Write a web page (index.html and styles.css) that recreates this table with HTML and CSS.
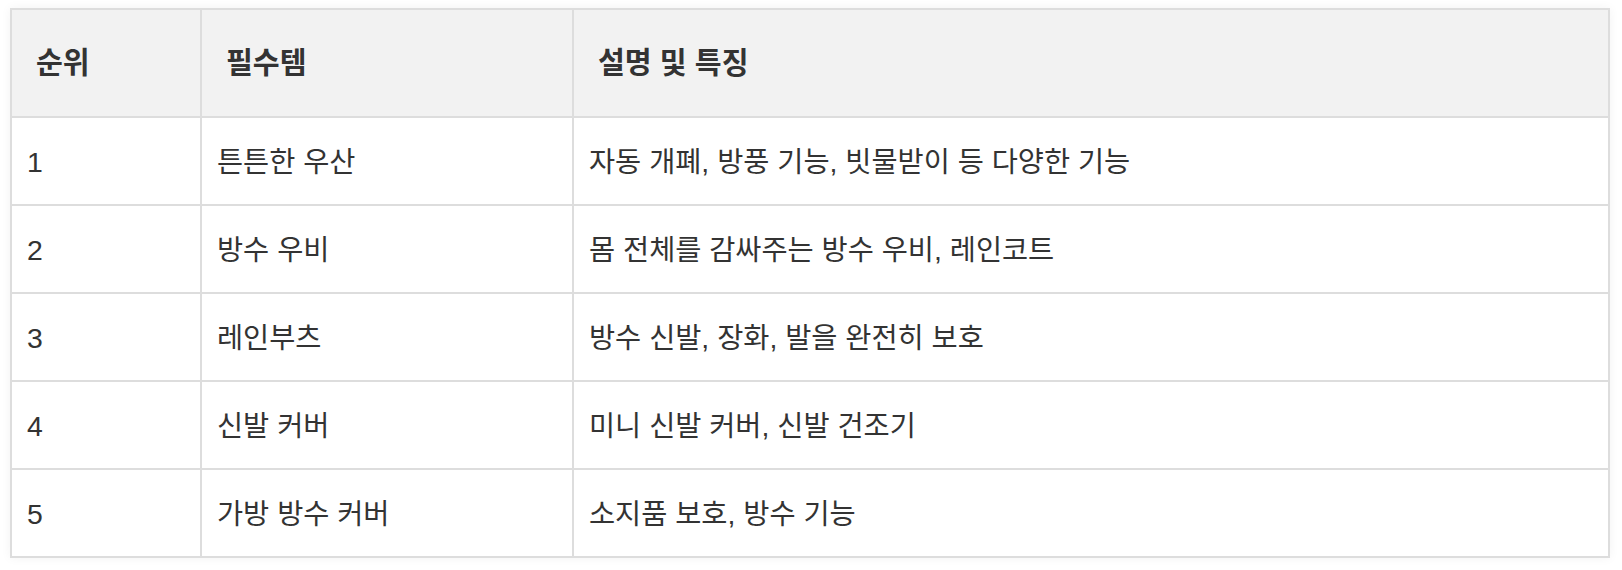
FILE: index.html
```html
<!DOCTYPE html>
<html lang="ko">
<head>
<meta charset="utf-8">
<link rel="stylesheet" href="styles.css">
</head>
<body>
<div class="wrap">
  <table class="items">
    <colgroup>
      <col class="c1">
      <col class="c2">
      <col class="c3">
    </colgroup>
    <thead>
      <tr><th>순위</th><th>필수템</th><th>설명 및 특징</th></tr>
    </thead>
    <tbody>
      <tr><td>1</td><td>튼튼한 우산</td><td>자동 개폐, 방풍 기능, 빗물받이 등 다양한 기능</td></tr>
      <tr><td>2</td><td>방수 우비</td><td>몸 전체를 감싸주는 방수 우비, 레인코트</td></tr>
      <tr><td>3</td><td>레인부츠</td><td>방수 신발, 장화, 발을 완전히 보호</td></tr>
      <tr><td>4</td><td>신발 커버</td><td>미니 신발 커버, 신발 건조기</td></tr>
      <tr><td>5</td><td>가방 방수 커버</td><td>소지품 보호, 방수 기능</td></tr>
    </tbody>
  </table>
</div>
</body>
</html>
```
FILE: styles.css
```css
html, body {
  margin: 0;
  padding: 0;
  background: #ffffff;
}
.wrap {
  padding: 8px 12px 10px 10px;
}
.items {
  width: 1600px;
  table-layout: fixed;
  border-collapse: separate;
  border-spacing: 0;
  border-top: 2px solid #dddddd;
  border-left: 2px solid #dddddd;
  box-shadow: 0 0 10px rgba(0, 0, 0, 0.05);
  font-family: "Liberation Sans", "Noto Sans CJK KR", sans-serif;
  color: #333333;
}
.c1 { width: 190px; }
.c2 { width: 372px; }
.c3 { width: 1036px; }
.items th,
.items td {
  border-right: 2px solid #dddddd;
  border-bottom: 2px solid #dddddd;
  text-align: left;
  line-height: 38px;
}
.items th {
  background: #f2f2f2;
  font-size: 29.2px;
  font-weight: 700;
  padding: 34px 24px;
}
.items td {
  font-size: 28.4px;
  font-weight: 400;
  padding: 25px 15px 23px;
}
```
